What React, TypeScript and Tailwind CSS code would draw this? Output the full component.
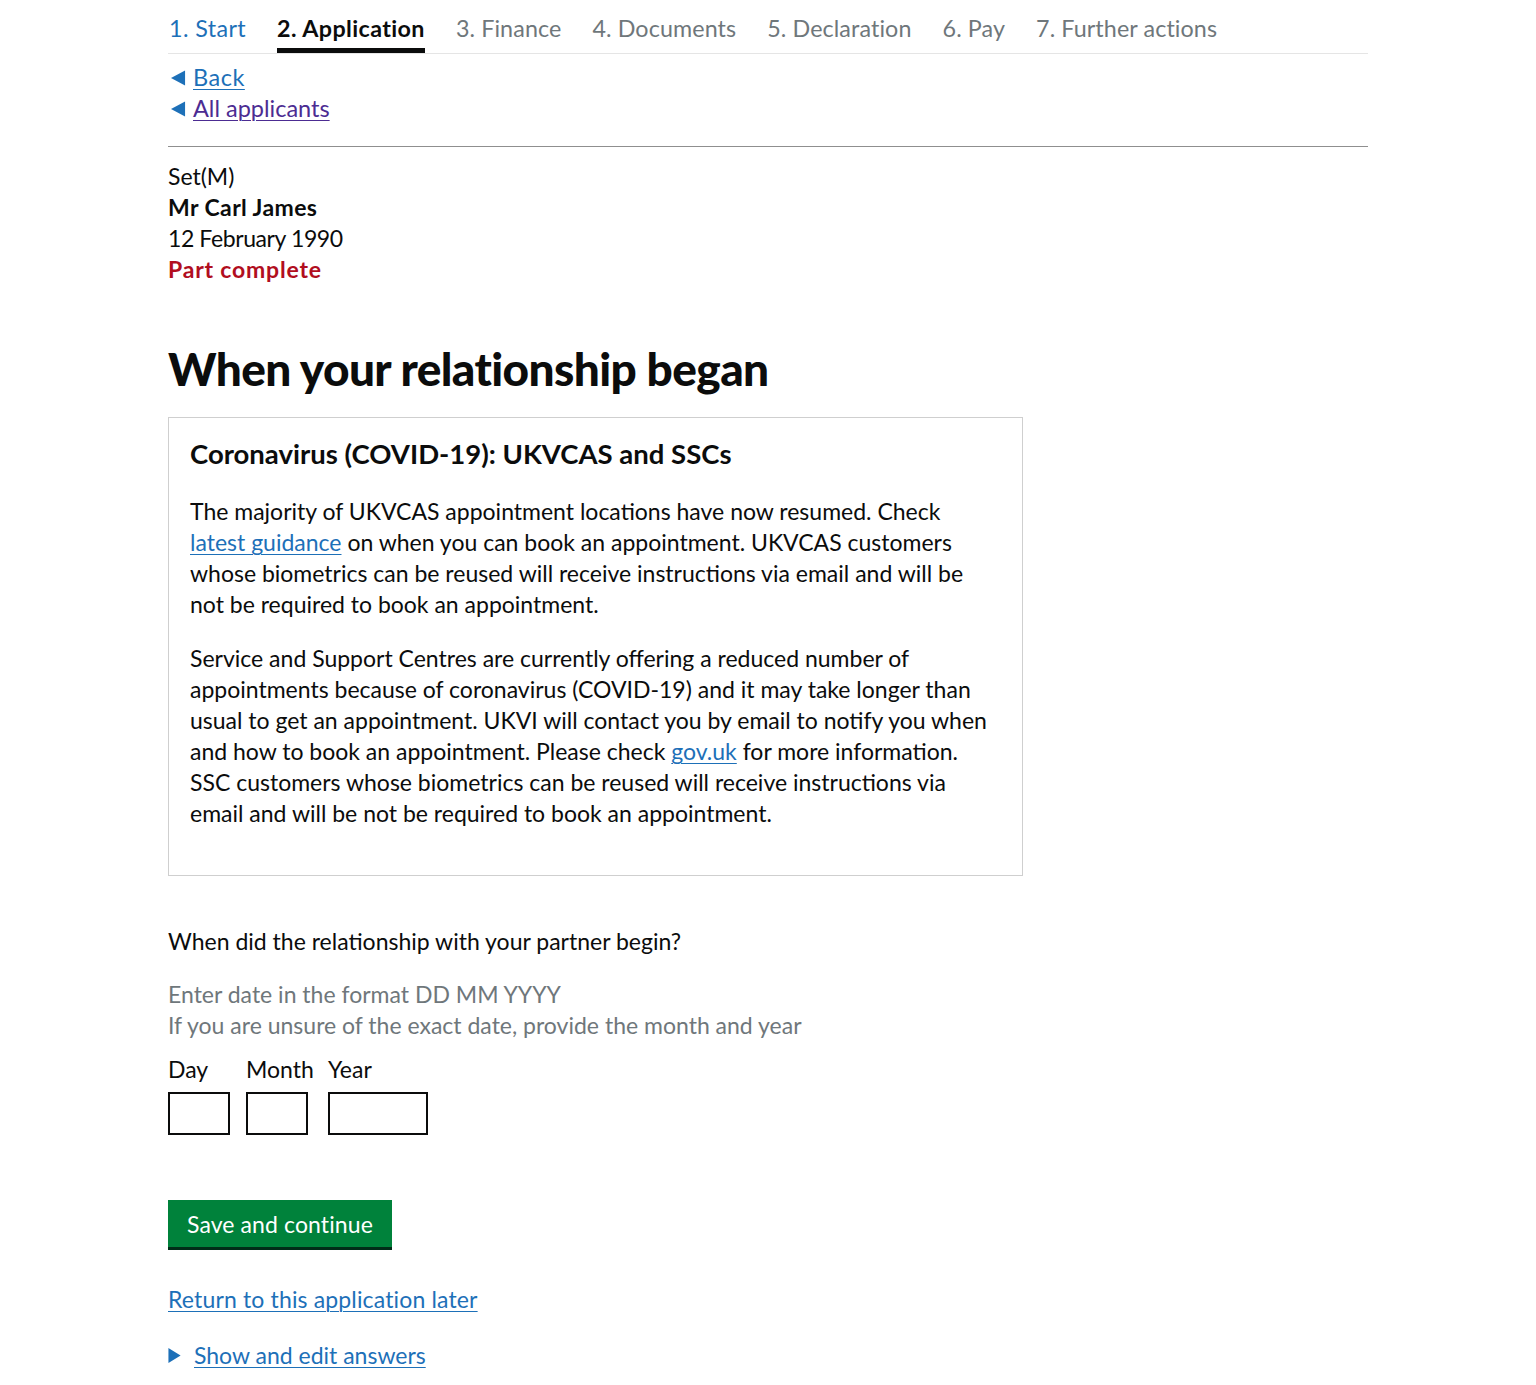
import React from "react";

const font = { fontFamily: "Lato, 'Noto Sans', Arial, sans-serif" };

function TriLeft({ className }: { className?: string }) {
  return (
    <svg viewBox="0 0 16 16" className={className} aria-hidden="true">
      <polygon points="0,8 15,0 15,16" fill="currentColor" />
    </svg>
  );
}

function TriRight({ className }: { className?: string }) {
  return (
    <svg viewBox="0 0 13 16" className={className} aria-hidden="true">
      <polygon points="0,0 13,8 0,16" fill="currentColor" />
    </svg>
  );
}

const link = "text-[#1d70b8] underline underline-offset-[3px] decoration-1";

export default function App() {
  const steps = [
    { label: "1. Start", state: "done" },
    { label: "2. Application", state: "active" },
    { label: "3. Finance", state: "todo" },
    { label: "4. Documents", state: "todo" },
    { label: "5. Declaration", state: "todo" },
    { label: "6. Pay", state: "todo" },
    { label: "7. Further actions", state: "todo" },
  ];
  return (
    <div className="min-h-[1385px] bg-white text-[#0b0c0c]" style={font}>
      <div className="mx-auto w-[1200px]">
        <nav className="flex gap-[31px] border-b border-[#e5e5e5] pt-[13px]">
          {steps.map((s) => (
            <div
              key={s.label}
              className={
                s.state === "active"
                  ? "border-b-[5px] border-[#0b0c0c] text-[23.3px] leading-[30px] font-bold tracking-[0.4px] text-[#0b0c0c] pb-[5px] whitespace-nowrap"
                  : s.state === "done"
                  ? "text-[23.3px] leading-[30px] tracking-[0.4px] text-[#1d70b8] pb-[10px] pl-[1px] whitespace-nowrap"
                  : "text-[23.3px] leading-[30px] tracking-[0.1px] text-[#6f777b] pb-[10px] whitespace-nowrap"
              }
            >
              {s.label}
            </div>
          ))}
        </nav>

        <div className="pt-[8px] pb-[22px] border-b border-[#8f8f8f]">
          <div className="flex items-center gap-[7px] leading-[31px] text-[23.5px]">
            <TriLeft className="w-[15px] h-[16px] ml-[3px] text-[#1d70b8]" />
            <a href="#" className={link + " tracking-[0.5px]"}>Back</a>
          </div>
          <div className="flex items-center gap-[7px] leading-[31px] text-[23.5px]">
            <TriLeft className="w-[15px] h-[16px] ml-[3px] text-[#1d70b8]" />
            <a href="#" className="text-[#4c2c92] underline underline-offset-[3px] decoration-1">All applicants</a>
          </div>
        </div>

        <div className="pt-[14px] text-[23px] leading-[31px]">
          <div>Set(M)</div>
          <div className="font-bold tracking-[0.4px]">Mr Carl James</div>
          <div className="tracking-[-0.4px]">12 February 1990</div>
          <div className="font-bold tracking-[0.8px] text-[#b10e1e]">Part complete</div>
        </div>

        <h1 className="mt-[56px] text-[46px] leading-[56px] font-black tracking-[-0.6px]">
          When your relationship began
        </h1>

        <div className="mt-[20px] w-[855px] border border-[#cfcfcf] px-[21px] pt-[18px] pb-[46px]">
          <h2 className="text-[27.5px] leading-[36px] font-bold">
            Coronavirus (COVID-19): UKVCAS and SSCs
          </h2>
          <p className="mt-[24px] text-[23px] leading-[31px] whitespace-nowrap">
            <span className="block">The majority of UKVCAS appointment locations have now resumed. Check</span>
            <span className="block">
              <a href="#" className={link}>latest guidance</a> on when you can book an appointment. UKVCAS customers
            </span>
            <span className="block">whose biometrics can be reused will receive instructions via email and will be</span>
            <span className="block">not be required to book an appointment.</span>
          </p>
          <p className="mt-[23px] text-[23px] leading-[31px] whitespace-nowrap">
            <span className="block">Service and Support Centres are currently offering a reduced number of</span>
            <span className="block">appointments because of coronavirus (COVID-19) and it may take longer than</span>
            <span className="block">usual to get an appointment. UKVI will contact you by email to notify you when</span>
            <span className="block">
              and how to book an appointment. Please check <a href="#" className={link}>gov.uk</a> for more information.
            </span>
            <span className="block">SSC customers whose biometrics can be reused will receive instructions via</span>
            <span className="block">email and will be not be required to book an appointment.</span>
          </p>
        </div>

        <div className="mt-[50px] text-[23px] leading-[31px]">
          When did the relationship with your partner begin?
        </div>
        <div className="mt-[22px] text-[23px] leading-[31px] text-[#6f777b]">
          <div>Enter date in the format DD MM YYYY</div>
          <div>If you are unsure of the exact date, provide the month and year</div>
        </div>

        <div className="mt-[13px] flex gap-[16px] text-[23px] leading-[31px]">
          <label className="flex flex-col gap-[7px]">
            <span>Day</span>
            <input className="w-[62px] h-[43px] border-2 border-[#0b0c0c] outline-none" />
          </label>
          <label className="flex flex-col gap-[7px] w-[66px]">
            <span className="whitespace-nowrap">Month</span>
            <input className="w-[62px] h-[43px] border-2 border-[#0b0c0c] outline-none" />
          </label>
          <label className="flex flex-col gap-[7px]">
            <span>Year</span>
            <input className="w-[100px] h-[43px] border-2 border-[#0b0c0c] outline-none" />
          </label>
        </div>

        <button className="mt-[65px] block bg-[#00823b] text-white text-[23px] tracking-[0.1px] leading-[30px] px-[19px] pt-[9px] pb-[8px] shadow-[0_3px_0_#002d18]">
          Save and continue
        </button>

        <div className="mt-[37px] text-[23px] leading-[31px] tracking-[0.15px]">
          <a href="#" className={link}>Return to this application later</a>
        </div>

        <div className="mt-[25px] flex items-center gap-[13px] text-[23px] leading-[31px]">
          <TriRight className="w-[13px] h-[15px] text-[#1d70b8]" />
          <a href="#" className={link}>Show and edit answers</a>
        </div>
      </div>
    </div>
  );
}
